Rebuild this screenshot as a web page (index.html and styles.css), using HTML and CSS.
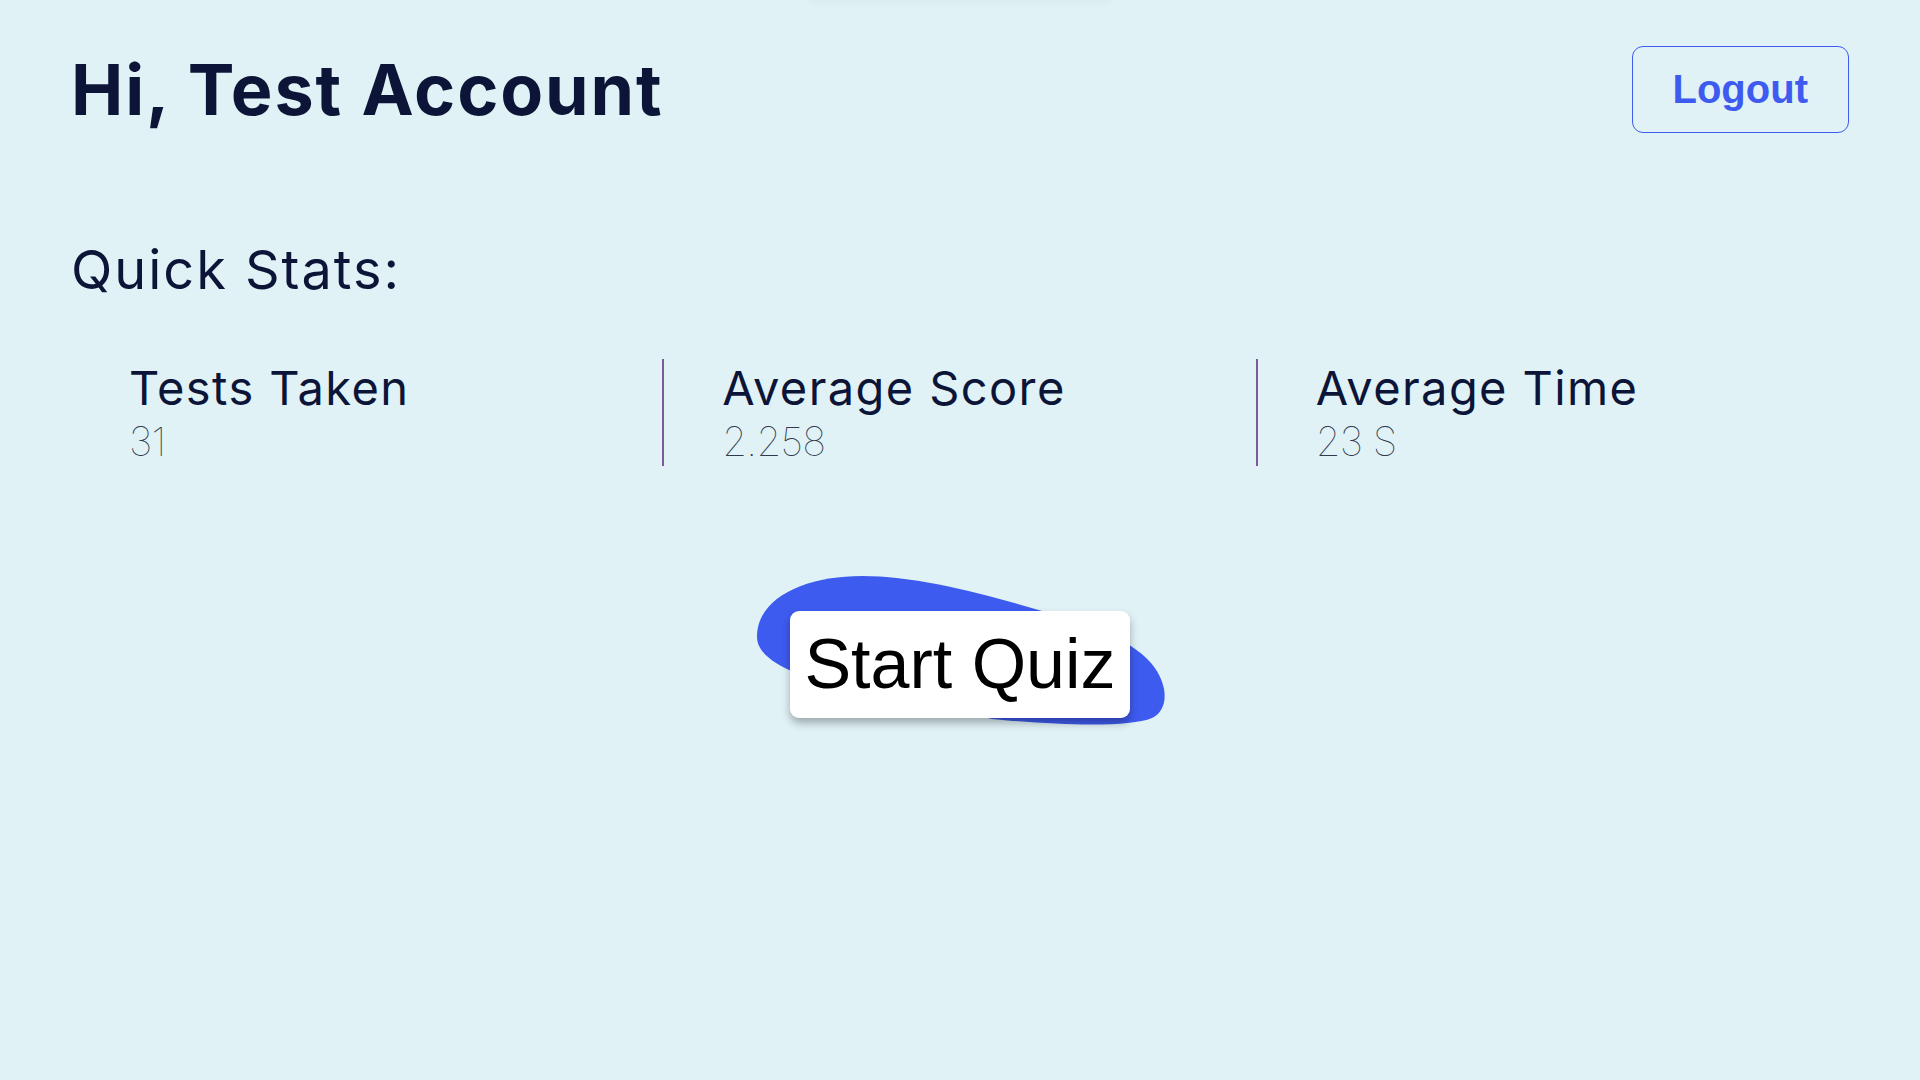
FILE: index.html
```html
<!DOCTYPE html>
<html lang="en">
<head>
  <meta charset="UTF-8" />
  <title>Dashboard</title>
  <link rel="stylesheet" href="styles.css">
</head>
<body>
  <div class="top-glow"></div>
  <div id="page">
    <div class="top-bar">
      <h1 class="greeting">Hi, Test Account</h1>
      <button class="logout-btn">Logout</button>
    </div>

    <h2 class="stats-title">Quick Stats:</h2>

    <div class="stats-row">
      <div class="stat">
        <div class="stat-label">Tests Taken</div>
        <div class="stat-value">31</div>
      </div>
      <div class="stat">
        <div class="stat-label">Average Score</div>
        <div class="stat-value">2.258</div>
      </div>
      <div class="stat">
        <div class="stat-label">Average Time</div>
        <div class="stat-value">23 S</div>
      </div>
    </div>

    <div class="quiz-area">
      <div class="quiz-wrap">
        <svg class="quiz-blob" width="412" height="152" viewBox="0 0 412 152">
          <path fill="#3e5bef" d="M1 62 C1 22 50 1 106 1 C160 1 225 18 286 36 C330 49 372 62 395 88 C412 108 414 134 396 143 C372 153 300 150 236 144 L40 98 C20 90 1 78 1 62 Z" />
        </svg>
        <button class="start-btn">Start Quiz</button>
      </div>
    </div>
  </div>
</body>
</html>
```

FILE: styles.css
```css
html, body {
  margin: 0;
  padding: 0;
  height: 100%;
  background: #e0f2f6;
  color: #0c1538;
  font-family: "Inter", "Open Sans", sans-serif;
  overflow: hidden;
}

.top-glow {
  position: absolute;
  top: -12px;
  left: 50%;
  width: 300px;
  height: 12px;
  margin-left: -150px;
  box-shadow: 0 2px 8px rgba(0, 0, 0, 0.04);
}

#page {
  padding: 46px 71px;
}

.top-bar {
  display: flex;
  justify-content: space-between;
  align-items: center;
}

.greeting {
  margin: 0;
  font-size: 70px;
  font-weight: 700;
  line-height: 87px;
  letter-spacing: 1.9px;
}

.logout-btn {
  background: transparent;
  border: 1px solid #3e5bef;
  border-radius: 11px;
  color: #3e5bef;
  font-family: "Liberation Sans", Arial, sans-serif;
  font-weight: bold;
  font-size: 40px;
  padding: 19px 40px 20px;
  line-height: 46px;
  cursor: pointer;
}

.stats-title {
  margin: 110px 0 0;
  font-size: 54px;
  font-weight: 400;
  line-height: 54px;
  letter-spacing: 2px;
}

.stats-row {
  display: flex;
  margin-top: 62px;
}

.stat {
  flex: 1;
  padding: 0 58px;
}

.stat + .stat {
  border-left: 2px solid #7a5c9c;
}

.stat-label {
  font-size: 47px;
  line-height: 58px;
  font-weight: 400;
  letter-spacing: 1.4px;
}

.stat-value {
  font-size: 40px;
  line-height: 49px;
  font-weight: 100;
  letter-spacing: -0.8px;
  color: #2f3a4f;
}

.quiz-area {
  display: flex;
  justify-content: center;
  margin-top: 145px;
}

.quiz-wrap {
  position: relative;
}

.quiz-blob {
  position: absolute;
  left: -34px;
  top: -36px;
}

.start-btn {
  position: relative;
  background: #fff;
  border: none;
  border-radius: 9px;
  color: #000;
  font-family: "Liberation Sans", Arial, sans-serif;
  font-size: 70px;
  line-height: 80px;
  padding: 13px 14px 14px;
  box-shadow: 0 5px 9px rgba(0, 0, 0, 0.3);
  cursor: pointer;
}
```
